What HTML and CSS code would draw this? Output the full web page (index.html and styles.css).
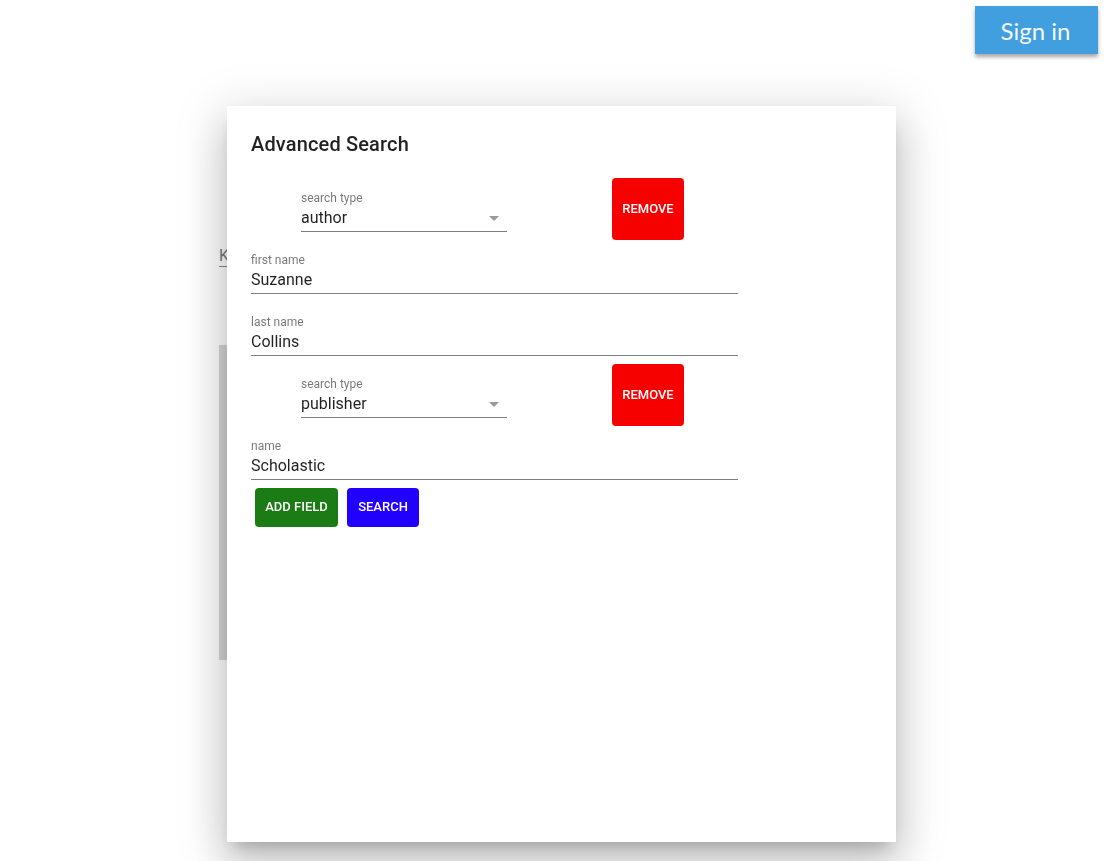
FILE: index.html
```html
<!DOCTYPE html>
<html lang="en">
<head>
<meta charset="utf-8">
<title>Advanced Search</title>
<link rel="stylesheet" href="styles.css">
</head>
<body>
<header class="topbar">
  <button class="signin" type="button">Sign in</button>
</header>
<main class="page">
  <div class="kw-field"><span class="kw-placeholder">K</span></div>
  <div class="results"></div>
</main>
<div class="dialog" role="dialog" aria-labelledby="dlg-title">
  <h2 class="dialog-title" id="dlg-title">Advanced Search</h2>
  <div class="dialog-content">
    <div class="row">
      <div class="field select">
        <div class="label">search type</div>
        <div class="input">
          <span class="value">author</span>
          <svg class="arrow" viewBox="0 0 24 24" width="24" height="24"><path d="M7 10l5 5 5-5z"/></svg>
        </div>
      </div>
      <button class="btn remove" type="button">Remove</button>
    </div>
    <div class="field wide">
      <div class="label">first name</div>
      <div class="input"><span class="value">Suzanne</span></div>
    </div>
    <div class="field wide">
      <div class="label">last name</div>
      <div class="input"><span class="value">Collins</span></div>
    </div>
    <div class="row">
      <div class="field select">
        <div class="label">search type</div>
        <div class="input">
          <span class="value">publisher</span>
          <svg class="arrow" viewBox="0 0 24 24" width="24" height="24"><path d="M7 10l5 5 5-5z"/></svg>
        </div>
      </div>
      <button class="btn remove" type="button">Remove</button>
    </div>
    <div class="field wide">
      <div class="label">name</div>
      <div class="input"><span class="value">Scholastic</span></div>
    </div>
    <div class="actions">
      <button class="btn add" type="button">Add Field</button>
      <button class="btn search" type="button">Search</button>
    </div>
  </div>
</div>
</body>
</html>
```

FILE: styles.css
```css
html, body {
  margin: 0;
  padding: 0;
  background: #fff;
  font-family: Roboto, "Liberation Sans", sans-serif;
}

.topbar {
  display: flex;
  justify-content: flex-end;
  padding: 6px 9px 0 0;
}

.signin {
  width: 123px;
  height: 48px;
  border: none;
  background: #419fdf;
  color: #f4f8fc;
  font-family: Lato, "DejaVu Sans", sans-serif;
  font-size: 24px;
  font-weight: 400;
  box-shadow: 0 3px 4px rgba(0, 0, 0, 0.35);
  padding: 0 2px 0 0;
  cursor: pointer;
}

.page {
  margin-left: 219px;
  padding-top: 192px;
}

.kw-field {
  width: 40px;
  padding-bottom: 1px;
  border-bottom: 1px solid #8a8a8a;
}

.kw-placeholder {
  display: block;
  font-size: 16px;
  line-height: 19px;
  color: #777;
}

.results {
  margin-top: 78px;
  width: 600px;
  height: 315px;
  background: #d6d6d6;
}

.dialog {
  position: fixed;
  left: 227px;
  top: 106px;
  width: 669px;
  height: 736px;
  background: #fff;
  box-shadow: 0 11px 15px -7px rgba(0, 0, 0, 0.2),
              0 24px 38px 3px rgba(0, 0, 0, 0.14),
              0 9px 46px 8px rgba(0, 0, 0, 0.12);
}

.dialog-title {
  margin: 0;
  padding: 22px 24px 0;
  font-size: 20px;
  font-weight: 500;
  line-height: 32px;
  letter-spacing: 0.0075em;
  color: rgba(0, 0, 0, 0.87);
}

.dialog-content {
  padding: 18px 24px 0;
}

.row {
  display: flex;
  align-items: flex-end;
}

.field {
  padding-top: 2px;
}

.field .label {
  font-size: 12px;
  line-height: 14px;
  color: rgba(0, 0, 0, 0.54);
}

.field .input {
  display: flex;
  align-items: center;
  justify-content: space-between;
  height: 19px;
  padding: 3px 0 4px;
  border-bottom: 1px solid rgba(0, 0, 0, 0.5);
  font-size: 16px;
  line-height: 19px;
  color: rgba(0, 0, 0, 0.87);
}

.select {
  width: 206px;
  margin: 0 0 8px 50px;
}

.arrow {
  fill: rgba(0, 0, 0, 0.4);
  margin-right: 1px;
  flex: none;
}

.wide {
  width: 487px;
}

.row + .field { margin-top: 11px; }
.field + .field { margin-top: 19px; }
.field + .row { margin-top: 8px; }

.btn {
  border: none;
  border-radius: 4px;
  color: #fff;
  font-family: Roboto, "Liberation Sans", sans-serif;
  font-size: 13px;
  font-weight: 500;
  text-transform: uppercase;
  padding: 0 8px 2px;
  cursor: pointer;
}

.remove {
  margin-left: 105px;
  width: 72px;
  height: 62px;
  background: #f60000;
}

.actions {
  display: flex;
  gap: 9px;
  margin-top: 8px;
  padding-left: 4px;
}

.add {
  height: 39px;
  min-width: 83px;
  background: #1b7c15;
}

.search {
  height: 39px;
  min-width: 72px;
  background: #2200fe;
}
```
